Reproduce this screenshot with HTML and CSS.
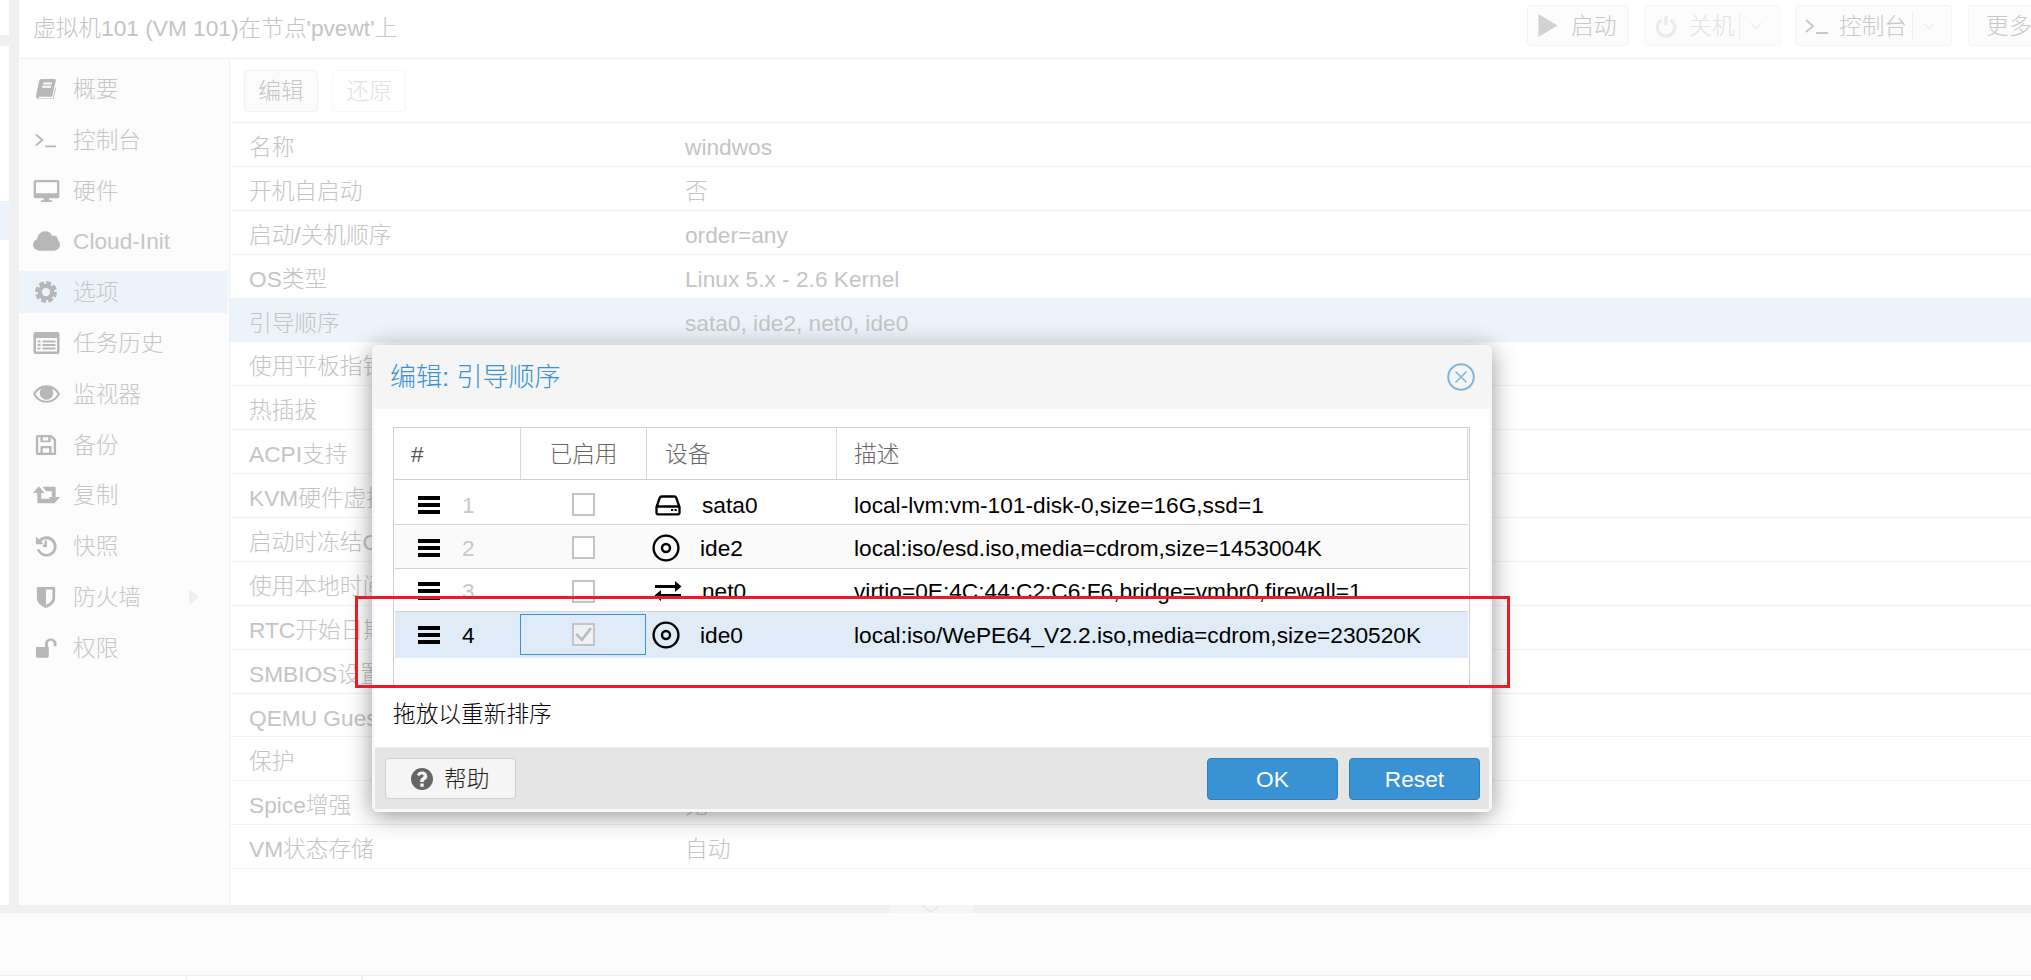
FILE: index.html
```html
<!DOCTYPE html>
<html>
<head>
  <meta charset="utf-8">
  <title>虚拟机101 (VM 101)</title>
  <link rel="stylesheet" href="styles.css">
</head>
<body>
  <svg class="defs" width="0" height="0">
    <symbol id="i-terminal" viewBox="0 0 24 24"><path d="M1 6l7 6-7 6M11 19h12" fill="none" stroke="currentColor" stroke-width="2"/></symbol>
    <symbol id="i-chevron" viewBox="0 0 24 24"><path d="M4 8l8 8 8-8" fill="none" stroke="currentColor" stroke-width="2"/></symbol>
    <symbol id="i-cd" viewBox="0 0 28 28"><circle cx="14" cy="14" r="12.400" fill="none" stroke="currentColor" stroke-width="2.400"/><circle cx="14" cy="14" r="4" fill="none" stroke="currentColor" stroke-width="2.400"/></symbol>
    <symbol id="i-bars" viewBox="0 0 22 18"><path d="M0 0h22v4H0zM0 7h22v4H0zM0 14h22v4H0z"/></symbol>
  </svg>

  <div class="page">
    <div class="upper">
      <div class="strip">
        <div class="strip-top"></div>
        <div class="strip-gap"></div>
        <div class="strip-low">
          <div class="strip-sel"></div>
        </div>
      </div>

      <div class="main">
        <header class="head">
          <div class="head-title">虚拟机101 (VM 101)在节点'pvewt'上</div>
          <div class="head-tools">
            <div class="tbtn btn-start">
              <svg class="ic-play" viewBox="0 0 20 24"><path d="M0 0l20 12L0 24z"/></svg>
              <span>启动</span>
            </div>
            <div class="tbtn btn-off">
              <svg class="ic-power" viewBox="0 0 24 24"><path d="M7 5.500a9.500 9.500 0 1 0 10 0" fill="none" stroke="currentColor" stroke-width="3.600"/><path d="M12 1v10" stroke="currentColor" stroke-width="3.600"/></svg>
              <span>关机</span>
              <i class="tsep"></i>
              <svg class="ic-chev"><use href="#i-chevron"/></svg>
            </div>
            <div class="tbtn btn-console">
              <svg class="ic-term"><use href="#i-terminal"/></svg>
              <span>控制台</span>
              <i class="tsep"></i>
              <svg class="ic-chev"><use href="#i-chevron"/></svg>
            </div>
            <div class="tbtn btn-more"><span>更多</span></div>
          </div>
        </header>

        <div class="body">
          <nav class="nav">
            <a class="nav-item">
              <svg class="nav-ic" viewBox="0 0 24 24"><path d="M7 1h14c1.500 0 2 1 1.600 2.200L19 19c-.3 1-1 1.500-2 1.500H5c-1.600 0-1.600 1.800 0 1.800h14.500l2.500-12 .8.600-2.500 12.100H4.500C1.800 23 .5 21 1.200 18.500L4.600 3C5 1.800 5.800 1 7 1zm2 4l-.4 2h9.500l.4-2zm-.8 3.500l-.4 2h9.500l.4-2z" fill-rule="evenodd"/></svg>
              <span>概要</span>
            </a>
            <a class="nav-item">
              <svg class="nav-ic"><use href="#i-terminal"/></svg>
              <span>控制台</span>
            </a>
            <a class="nav-item">
              <svg class="nav-ic wide" viewBox="0 0 28 24"><path d="M2 0h24c1.100 0 2 .9 2 2v16c0 1.100-.9 2-2 2h-9v2h3v2H8v-2h3v-2H2c-1.100 0-2-.9-2-2V2C0 .9.900 0 2 0zm.5 2.500v12h23v-12z" fill-rule="evenodd"/></svg>
              <span>硬件</span>
            </a>
            <a class="nav-item">
              <svg class="nav-ic wide" viewBox="0 0 28 22"><path d="M6.500 21C3 21 0 18.500 0 15c0-2.800 1.800-5 4.300-5.800C4.500 5 8 1 12.500 1c3.500 0 6.400 2 7.700 5 .8-.5 1.700-.7 2.500-.5 2.200.5 3.300 2.500 3 4.800C27 11.200 28 13 28 15c0 3.500-2.800 6-6 6z"/></svg>
              <span>Cloud-Init</span>
            </a>
            <a class="nav-item active">
              <svg class="nav-ic" viewBox="0 0 24 24"><circle cx="12" cy="12" r="6.800" fill="none" stroke="currentColor" stroke-width="4.600"/><circle cx="12" cy="12" r="10" fill="none" stroke="currentColor" stroke-width="4" stroke-dasharray="5.200 2.650"/></svg>
              <span>选项</span>
            </a>
            <a class="nav-item">
              <svg class="nav-ic wide" viewBox="0 0 26 22"><path d="M2 0h22c1.100 0 2 .9 2 2v18c0 1.100-.9 2-2 2H2c-1.100 0-2-.9-2-2V2C0 .9.900 0 2 0zm.5 6v13.500h21V6zM4 8.500h3v2H4zm5 0h13v2H9zM4 12h3v2H4zm5 0h13v2H9zm-5 3.500h3v2H4zm5 0h13v2H9z" fill-rule="evenodd"/></svg>
              <span>任务历史</span>
            </a>
            <a class="nav-item">
              <svg class="nav-ic wide" viewBox="0 0 28 20"><path d="M0 10C3 4 8 1 14 1s11 3 14 9c-3 6-8 9-14 9S3 16 0 10zm2.500 0C5 14.500 9 17 14 17s9-2.500 11.500-7C24 7.500 22 5.700 19.500 4.500c1 1.300 1.500 3 1.500 4.500a7 7 0 0 1-14 0c0-1.500.5-3.200 1.500-4.500C6 5.700 4 7.500 2.500 10z" fill-rule="evenodd"/></svg>
              <span>监视器</span>
            </a>
            <a class="nav-item">
              <svg class="nav-ic" viewBox="0 0 24 24"><path d="M3 1h15l5 5v15c0 1.100-.9 2-2 2H3c-1.100 0-2-.9-2-2V3c0-1.100.9-2 2-2zm.5 2.500v17H6V13h12v7.500h2.500V7L17 3.500V9H6V3.500zm5 0V7h6V3.500zm0 12v5h7v-5z" fill-rule="evenodd"/></svg>
              <span>备份</span>
            </a>
            <a class="nav-item">
              <svg class="nav-ic wide" viewBox="0 0 28 20"><path d="M6 1l6 7H8.500v6H19l3 4.500H5.500c-.6 0-1-.4-1-1V8H0zM10 1.500h12.500c.6 0 1 .4 1 1V12H28l-6 7-6-7h3.500V6h-6z"/></svg>
              <span>复制</span>
            </a>
            <a class="nav-item">
              <svg class="nav-ic" viewBox="0 0 24 24"><path d="M4.500 5A11 11 0 1 1 2 15.500h3A8 8 0 1 0 6.700 7.200L9.500 10H1V1.500z"/><path d="M13 6v7H8.500v-2.500H10.500V6z"/></svg>
              <span>快照</span>
            </a>
            <a class="nav-item has-sub">
              <svg class="nav-ic" viewBox="0 0 24 24"><path d="M3 1h18c.6 0 1 .4 1 1v11c0 6-6 9.500-10 11C8 22.500 2 19 2 13V2c0-.6.400-1 1-1zm9 2.800v16.700c3-1.300 7-4 7-7.500V3.800z" fill-rule="evenodd"/></svg>
              <span>防火墙</span>
              <svg class="nav-arrow" viewBox="0 0 10 16"><path d="M0 0l10 8-10 8z"/></svg>
            </a>
            <a class="nav-item">
              <svg class="nav-ic" viewBox="0 0 24 24"><path d="M1 11h14v10c0 .8-.7 1.500-1.500 1.500h-11C1.700 22.500 1 21.800 1 21zM11 11V7.500C11 4 13.500 1.500 17 1.500S23.500 4 23.500 7.500V10h-3V7.500c0-2-1.500-3.500-3.500-3.500s-3 1.500-3 3.500V11z"/></svg>
              <span>权限</span>
            </a>
          </nav>

          <section class="content">
            <div class="toolbar">
              <div class="tool">编辑</div>
              <div class="tool disabled">还原</div>
            </div>
            <div class="opts">
              <div class="opt"><span class="opt-k">名称</span><span>windwos</span></div>
              <div class="opt"><span class="opt-k">开机自启动</span><span>否</span></div>
              <div class="opt"><span class="opt-k">启动/关机顺序</span><span>order=any</span></div>
              <div class="opt"><span class="opt-k">OS类型</span><span>Linux 5.x - 2.6 Kernel</span></div>
              <div class="opt selected"><span class="opt-k">引导顺序</span><span>sata0, ide2, net0, ide0</span></div>
              <div class="opt"><span class="opt-k">使用平板指针</span></div>
              <div class="opt"><span class="opt-k">热插拔</span></div>
              <div class="opt"><span class="opt-k">ACPI支持</span></div>
              <div class="opt"><span class="opt-k">KVM硬件虚拟化</span></div>
              <div class="opt"><span class="opt-k">启动时冻结CPU</span></div>
              <div class="opt"><span class="opt-k">使用本地时间</span></div>
              <div class="opt"><span class="opt-k">RTC开始日期</span></div>
              <div class="opt"><span class="opt-k">SMBIOS设置</span></div>
              <div class="opt"><span class="opt-k">QEMU Guest Agent</span></div>
              <div class="opt"><span class="opt-k">保护</span></div>
              <div class="opt"><span class="opt-k">Spice增强</span><span>无</span></div>
              <div class="opt"><span class="opt-k">VM状态存储</span><span>自动</span></div>
            </div>
          </section>
        </div>
      </div>
    </div>

    <div class="band">
      <div class="band-handle">
        <svg viewBox="0 0 18 8"><path d="M1 1l8 6 8-6" fill="none" stroke="#e8e8e8" stroke-width="2"/></svg>
      </div>
    </div>
    <div class="log"></div>
    <div class="log-head">
      <div class="log-cell first"></div>
      <div class="log-cell second"></div>
      <div class="log-cell"></div>
    </div>
  </div>

  <!-- 对话框 -->
  <div class="win">
    <div class="win-head">
      <div class="win-title">编辑: 引导顺序</div>
      <svg class="win-close" viewBox="0 0 28 28"><circle cx="14" cy="14" r="12.800" fill="none" stroke="currentColor" stroke-width="2"/><path d="M8.500 8.500l11 11M19.500 8.500l-11 11" stroke="currentColor" stroke-width="1.600"/></svg>
    </div>
    <div class="win-body">
      <div class="grid">
        <div class="grid-head">
          <div class="gh gh-num">#</div>
          <div class="gh gh-on">已启用</div>
          <div class="gh gh-dev">设备</div>
          <div class="gh gh-desc">描述</div>
        </div>
        <div class="grid-row row-first">
          <div class="c-num"><svg class="bars"><use href="#i-bars"/></svg><span>1</span></div>
          <div class="c-on"><i class="check"></i></div>
          <div class="c-dev">
            <svg class="dev-ic shifted" viewBox="0 0 28 28"><path d="M7.500 5.500h13c.8 0 1.300.4 1.600 1L25.500 16v5.500c0 1-.8 1.800-1.800 1.800H4.300c-1 0-1.800-.8-1.800-1.800V16L5.900 6.500c.3-.6.800-1 1.600-1zM3 15.500h22" fill="none" stroke="currentColor" stroke-width="2.300"/><path d="M17 18h2.200v2H17zM20.500 18h2.200v2h-2.200z"/></svg>
            <span class="dev-name">sata0</span>
          </div>
          <div class="c-desc">local-lvm:vm-101-disk-0,size=16G,ssd=1</div>
        </div>
        <div class="grid-row alt">
          <div class="c-num"><svg class="bars"><use href="#i-bars"/></svg><span>2</span></div>
          <div class="c-on"><i class="check"></i></div>
          <div class="c-dev">
            <svg class="dev-ic"><use href="#i-cd"/></svg>
            <span class="dev-name">ide2</span>
          </div>
          <div class="c-desc">local:iso/esd.iso,media=cdrom,size=1453004K</div>
        </div>
        <div class="grid-row">
          <div class="c-num"><svg class="bars"><use href="#i-bars"/></svg><span>3</span></div>
          <div class="c-on"><i class="check"></i></div>
          <div class="c-dev">
            <svg class="dev-ic shifted" viewBox="0 0 28 28"><path d="M1 9.500h21M6 18.500h21" stroke="currentColor" stroke-width="2.800"/><path d="M21 4l6.500 5.500L21 15zM7 13l-6.500 5.500L7 24z"/></svg>
            <span class="dev-name">net0</span>
          </div>
          <div class="c-desc">virtio=0E:4C:44:C2:C6:F6,bridge=vmbr0,firewall=1</div>
        </div>
        <div class="grid-row selected">
          <div class="c-num"><svg class="bars"><use href="#i-bars"/></svg><span>4</span></div>
          <div class="c-on focused">
            <i class="check">
              <svg viewBox="0 0 18 18"><path d="M2 8.500l5.500 5.500L16 3" fill="none" stroke="#bdbdbd" stroke-width="2.600"/></svg>
            </i>
          </div>
          <div class="c-dev">
            <svg class="dev-ic"><use href="#i-cd"/></svg>
            <span class="dev-name">ide0</span>
          </div>
          <div class="c-desc">local:iso/WePE64_V2.2.iso,media=cdrom,size=230520K</div>
        </div>
      </div>
      <div class="hint">拖放以重新排序</div>
    </div>
    <div class="win-foot">
      <div class="help">
        <svg class="help-ic" viewBox="0 0 22 22"><path d="M11 0a11 11 0 1 1 0 22a11 11 0 0 1 0-22zM9.300 15.500v3.200h3.400v-3.200zM11 3.500c-2.500 0-4.200 1.200-5 3.200l2.300 1.500c.5-1.200 1.300-1.800 2.500-1.800 1.100 0 1.900.6 1.900 1.400 0 .9-.7 1.300-1.600 1.900-1 .6-1.800 1.400-1.800 2.800V14h3.400v-.4c0-.7.4-1 1.200-1.500 1.200-.8 2.400-1.800 2.400-3.900 0-2.800-2.400-4.700-5.300-4.700z" fill-rule="evenodd"/></svg>
        <span>帮助</span>
      </div>
      <div class="primary">OK</div>
      <div class="primary">Reset</div>
    </div>
  </div>

  <!-- 截图上的红框标注 -->
  <div class="mark"></div>
</body>
</html>
```

FILE: styles.css
```css
* {
  box-sizing: border-box;
}

html, body {
  margin: 0;
  height: 100%;
  overflow: hidden;
}

body {
  width: 2031px;
  height: 980px;
  position: relative;
  background: #fff;
  font-family: "Liberation Sans", "Noto Sans CJK SC", sans-serif;
  font-size: 22.7px;
  font-weight: 300;
  line-height: 30px;
  color: #c2c2c2;
}

.defs {
  position: absolute;
}

.page {
  display: flex;
  flex-direction: column;
  height: 980px;
}

.upper {
  display: flex;
  height: 905px;
  background: #f0f0f0;
}

/* 左边被遮住的资源树 */
.strip {
  width: 9px;
  display: flex;
  flex-direction: column;
  margin-right: 10px;
}

.strip-top {
  height: 35px;
  background: #fff;
}

.strip-gap {
  height: 11px;
}

.strip-low {
  flex: 1;
  background: #fff;
  padding-top: 155px;
}

.strip-sel {
  height: 39px;
  background: #ecf3fa;
}

.main {
  flex: 1;
  display: flex;
  flex-direction: column;
  background: #fff;
}

.head {
  height: 59px;
  flex: none;
  display: flex;
  justify-content: space-between;
  padding: 5px 0 0 14px;
  border-bottom: 1px solid #f0f0f0;
}

.head-title {
  line-height: 46px;
  color: #c4c4c4;
}

.head-tools {
  display: flex;
  gap: 15px;
  margin-right: -7px;
}

.tbtn {
  height: 41px;
  display: flex;
  align-items: center;
  background: #fcfcfc;
  border: 1px solid #f3f3f3;
  border-radius: 4px;
  color: #c8c8c8;
}

.btn-start {
  width: 102px;
  padding-left: 10px;
  gap: 13px;
}

.ic-play {
  width: 20px;
  height: 23px;
  fill: #d2d2d2;
}

.btn-off {
  width: 137px;
  padding-left: 10px;
  color: #e2e2e2;
  border-color: #f7f7f7;
}

.ic-power {
  width: 22px;
  height: 24px;
  margin-right: 12px;
  color: #ebebeb;
}

.tsep {
  width: 1px;
  height: 27px;
  background: #f0f0f0;
  margin: 0 8px 0 5px;
}

.ic-chev {
  width: 16px;
  height: 16px;
  color: #ececec;
}

.btn-console {
  width: 157px;
  margin-left: -1px;
  padding-left: 9px;
}

.ic-term {
  width: 24px;
  height: 24px;
  margin-right: 10px;
}

.btn-more {
  width: 70px;
  margin-left: 1px;
  padding-left: 17px;
}

.body {
  flex: 1;
  display: flex;
  min-height: 0;
}

.nav {
  width: 211px;
  flex: none;
  background: #fcfcfc;
  border-right: 1px solid #f0f0f0;
  padding-top: 9px;
  display: flex;
  flex-direction: column;
  gap: 8.8px;
}

.nav-item {
  height: 42px;
  display: flex;
  align-items: center;
  color: #c6c6c6;
  position: relative;
}

.nav-item.active {
  background: #ecf3fa;
  margin-right: 1px;
}

.nav-ic {
  width: 22px;
  height: 22px;
  margin-left: 16px;
  margin-right: 16px;
  fill: #b7b7b7;
  color: #b7b7b7;
  flex: none;
}

.nav-ic.wide {
  width: 27px;
  margin-left: 14px;
  margin-right: 13px;
}

.nav-arrow {
  position: absolute;
  left: 170px;
  top: 13px;
  width: 10px;
  height: 16px;
  fill: #efefef;
}

.content {
  flex: 1;
  display: flex;
  flex-direction: column;
}

.toolbar {
  height: 64px;
  flex: none;
  display: flex;
  gap: 14px;
  padding: 11px 0 0 14px;
  border-bottom: 1px solid #f0f0f0;
}

.tool {
  width: 74px;
  height: 42px;
  line-height: 40px;
  text-align: center;
  background: #fbfbfb;
  border: 1px solid #f1f1f1;
  border-radius: 4px;
  color: #c6c6c6;
}

.tool.disabled {
  background: #fff;
  border-color: #f7f7f7;
  color: #e2e2e2;
}

.opt {
  height: 43.9px;
  display: flex;
  align-items: center;
  padding: 5px 0 0 19px;
  border-bottom: 1px solid #f2f2f2;
  color: #c4c4c4;
}

.opt.selected {
  background: #ecf3fa;
  border-bottom-color: #ecf3fa;
}

.opt-k {
  width: 436px;
  flex: none;
}

.band {
  height: 8px;
  background: #f0f0f0;
  display: flex;
  padding-left: 889px;
}

.band-handle {
  width: 84px;
  background: #f5f5f5;
  display: flex;
  justify-content: center;
}

.band-handle svg {
  width: 18px;
  height: 8px;
}

.log {
  height: 62px;
  background: #fcfcfc;
}

.log-head {
  flex: 1;
  display: flex;
  border-top: 1px solid #f0f0f0;
}

.log-cell {
  border-right: 1px solid #f0f0f0;
}

.log-cell.first {
  width: 187px;
}

.log-cell.second {
  width: 175px;
}

/* window */
.win {
  position: absolute;
  left: 372px;
  top: 345px;
  width: 1120px;
  height: 467px;
  display: flex;
  flex-direction: column;
  background: #fff;
  border: 3px solid #f8f8f8;
  border-top-width: 0;
  border-radius: 6px;
  box-shadow: 0 4px 24px rgba(0, 0, 0, .42);
  color: #000;
}

.win-head {
  height: 64px;
  flex: none;
  display: flex;
  align-items: center;
  justify-content: space-between;
  margin: 0 -3px;
  padding: 0 17px 0 18px;
  background: #f5f5f5;
  border-radius: 6px 6px 0 0;
}

.win-title {
  font-size: 26px;
  color: #3892d4;
}

.win-close {
  width: 28px;
  height: 28px;
  color: #7fb6e0;
}

.win-body {
  flex: 1;
  padding: 18px 19px 0 18px;
}

.grid {
  height: 260px;
  border: 1px solid #cfcfcf;
  border-bottom: 0;
}

.grid-head {
  height: 52px;
  display: flex;
  border-bottom: 1px solid #cfcfcf;
  color: #666;
}

.gh {
  display: flex;
  align-items: center;
  border-right: 1px solid #d8d8d8;
}

.gh-num {
  width: 127px;
  padding-left: 17px;
  color: #555;
}

.gh-on {
  width: 126px;
  justify-content: center;
}

.gh-dev {
  width: 190px;
  padding-left: 18px;
}

.gh-desc {
  flex: 1;
  padding-left: 17px;
  margin-right: 1px;
}

.grid-row {
  height: 44px;
  margin: 0 1px;
  padding-top: 2px;
  display: flex;
  align-items: stretch;
  border-bottom: 1px solid #d4d4d4;
}

.grid-row.row-first {
  height: 45px;
  padding-top: 5px;
}

.grid-row.alt {
  background: #fafafa;
}

.grid-row:nth-child(4) {
  height: 43px;
}

.grid-row.selected {
  height: 46px;
  padding-top: 0;
  background: #dfebf6;
  border-bottom: 0;
}

.c-num {
  width: 125px;
  flex: none;
  display: flex;
  align-items: center;
  padding-left: 23px;
  color: #c8c8c8;
}

.selected .c-num {
  color: #000;
}

.bars {
  width: 22px;
  height: 18px;
  margin-right: 22px;
}

.c-on {
  width: 126px;
  flex: none;
  display: flex;
  align-items: center;
  justify-content: center;
  border: 1px solid transparent;
}

.c-on.focused {
  border-color: #3892d4;
  margin: 2px 0 3px;
}

.check {
  display: block;
  width: 23px;
  height: 23px;
  border: 2px solid #c4c4c4;
  background: #fff;
}

.focused .check {
  background: #eef2f6;
}

.check svg {
  display: block;
  width: 19px;
  height: 19px;
}

.c-dev {
  width: 190px;
  flex: none;
  display: flex;
  align-items: center;
  padding-left: 6px;
}

.dev-ic {
  width: 28px;
  height: 28px;
  margin-right: 20px;
  flex: none;
}

.dev-ic.shifted {
  margin-left: 2px;
  margin-right: 20px;
}

.c-desc {
  flex: 1;
  display: flex;
  align-items: center;
  padding-left: 18px;
  white-space: nowrap;
}

.hint {
  padding-top: 12px;
  line-height: 30px;
}

.win-foot {
  height: 62px;
  flex: none;
  display: flex;
  align-items: flex-start;
  gap: 11px;
  padding: 10px 9px 0 10px;
  background: #e5e5e5;
  border-top: 1px solid #ececec;
}

.help {
  width: 131px;
  height: 41px;
  display: flex;
  align-items: center;
  padding-left: 25px;
  gap: 11px;
  background: #f5f5f5;
  border: 1px solid #cfcfcf;
  border-radius: 4px;
  margin-right: auto;
  color: #222;
}

.help-ic {
  width: 22px;
  height: 22px;
  fill: #666;
}

.primary {
  width: 131px;
  height: 42px;
  line-height: 40px;
  text-align: center;
  background: #3892d4;
  border: 1px solid #2a80c4;
  border-radius: 4px;
  color: #fff;
}

/* 红框 */
.mark {
  position: absolute;
  left: 355px;
  top: 596px;
  width: 1155px;
  height: 92px;
  border: 3px solid #ed1c24;
}
```
